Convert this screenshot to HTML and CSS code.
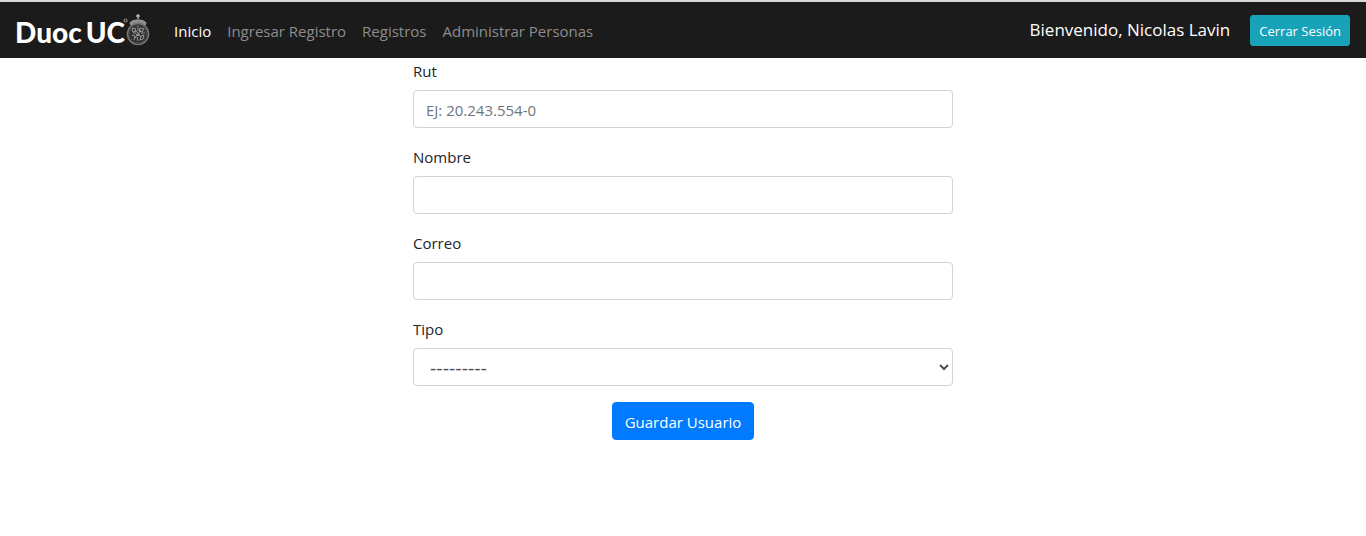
FILE: index.html
```html
<!DOCTYPE html>
<html lang="es">
<head>
<meta charset="utf-8">
<meta name="viewport" content="width=device-width, initial-scale=1">
<title>Administrar Personas</title>
<link rel="stylesheet" href="styles.css">
</head>
<body>
<header class="navbar">
  <a class="brand" href="#"><span class="wordmark"><span>Duoc</span><span>UC</span></span><svg class="crest" viewBox="0 0 27 32" fill="none" stroke="#a3a3a3" aria-hidden="true">
      <circle cx="2.500" cy="6.500" r="1.500" stroke="#888" stroke-width="1.200"/>
      <path d="M15 0v5M13 2h4" stroke="#b5b5b5" stroke-width="1.400"/>
      <path d="M7 9c2-4 14-4 16 0l-1 2H8z" fill="#8a8a8a" stroke="#a8a8a8"/>
      <ellipse cx="15" cy="20" rx="10.500" ry="10.500" fill="#303030" stroke="#747474" stroke-width="1.600"/>
      <ellipse cx="15" cy="20" rx="8.500" ry="8.500" stroke="#626262" stroke-dasharray="1 1"/>
      <path d="M9 15l3-1 1 3-3 1zM17 14l4 1-2 3-3-1zM9 21l3 1-1 4M13 20l2 2 2-2M18 22l3-1-1 4-3 1zM15 12v5M14 23l1 4M10 19h3M18 19h4M12 16l6 7M18 16l-6 8" stroke-width="0.900"/>
    </svg></a>
  <nav class="menu">
    <a class="link active" href="#">Inicio</a>
    <a class="link" href="#">Ingresar Registro</a>
    <a class="link" href="#">Registros</a>
    <a class="link" href="#">Administrar Personas</a>
  </nav>
  <span class="welcome">Bienvenido, Nicolas Lavin</span>
  <button class="btn logout" type="button">Cerrar Sesión</button>
</header>
<main class="container">
  <form class="form">
    <div class="group">
      <label for="rut">Rut</label>
      <input class="control" id="rut" type="text" placeholder="EJ: 20.243.554-0">
    </div>
    <div class="group">
      <label for="nombre">Nombre</label>
      <input class="control" id="nombre" type="text">
    </div>
    <div class="group">
      <label for="correo">Correo</label>
      <input class="control" id="correo" type="email">
    </div>
    <div class="group">
      <label for="tipo">Tipo</label>
      <select class="control select" id="tipo"><option>---------</option></select>
    </div>
    <button class="btn save" type="submit">Guardar Usuario</button>
  </form>
</main>
</body>
</html>
```

FILE: styles.css
```css
* { box-sizing: border-box; }
body {
  margin: 0;
  background: #fff;
  color: #212529;
  font: 15px/24px "Segoe UI", "Open Sans", "Noto Sans", sans-serif;
}
.navbar {
  display: flex;
  align-items: center;
  min-height: 58px;
  padding: 0 16px 0 15px;
  border-top: 2px solid #d5d8d8;
  background: #1b1b1b;
}
.brand {
  display: flex;
  align-items: center;
  margin-right: 16px;
  color: #fff;
  text-decoration: none;
}
.wordmark {
  display: flex;
  gap: 4px;
  padding-top: 4px;
  font: 900 28px/40px Lato, sans-serif;
}
.crest {
  width: 27px;
  height: 32px;
  margin-left: -2px;
}
.menu { display: flex; flex: 1; }
.link {
  padding: 9px 8px 7px;
  color: #8d8d8d;
  text-decoration: none;
  white-space: nowrap;
}
.link.active { color: #fff; }
.welcome {
  margin-right: 20px;
  color: #fff;
  font-size: 17px;
  white-space: nowrap;
}
.btn {
  border: 1px solid;
  border-radius: 4px;
  color: #fff;
  font: inherit;
  white-space: nowrap;
  cursor: pointer;
}
.logout {
  padding: 5px 8px 3px;
  border-color: #17a2b8;
  border-radius: 3px;
  background: #17a2b8;
  font-size: 13px;
  line-height: 21px;
}
.container {
  max-width: 540px;
  margin: 0 auto;
}
.form {
  display: flex;
  flex-direction: column;
  gap: 16px;
}
.group {
  display: flex;
  flex-direction: column;
  gap: 8px;
}
.group label {
  padding-top: 2px;
  line-height: 22px;
}
.control {
  width: 100%;
  height: 38px;
  padding: 7px 12px 5px;
  border: 1px solid #ced4da;
  border-radius: 4px;
  background: #fff;
  color: #495057;
  font: inherit;
}
.select {
  font-family: "Liberation Sans", sans-serif;
  font-size: 19px;
}
.control::placeholder { color: #6c757d; }
.save {
  align-self: center;
  padding: 7px 12px 5px;
  border-color: #007bff;
  background: #007bff;
}
```
